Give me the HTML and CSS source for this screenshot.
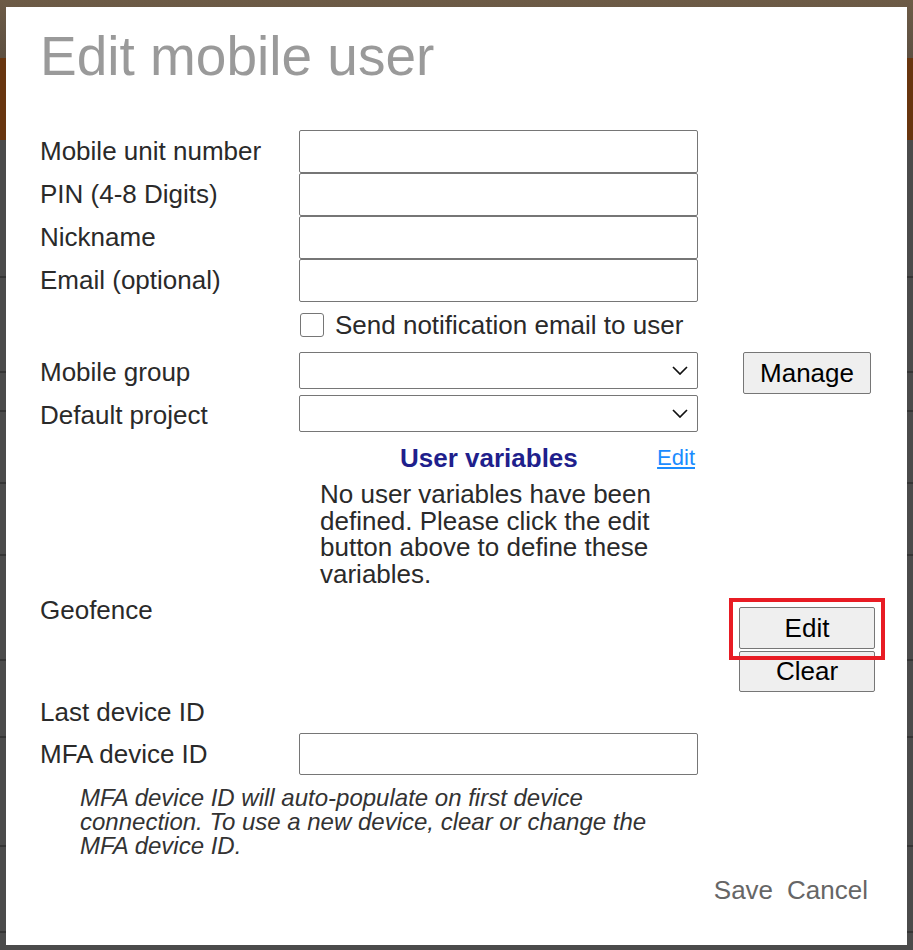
FILE: index.html
```html
<!DOCTYPE html>
<html lang="en">
<head>
<meta charset="utf-8">
<title>Edit mobile user</title>
<link rel="stylesheet" href="styles.css">
</head>
<body>
<div class="dialog">
  <h1 class="title">Edit mobile user</h1>
  <div class="form">
    <div class="row"><label class="lbl">Mobile unit number</label><input class="txt" type="text"></div>
    <div class="row"><label class="lbl">PIN (4-8 Digits)</label><input class="txt" type="text"></div>
    <div class="row"><label class="lbl">Nickname</label><input class="txt" type="text"></div>
    <div class="row"><label class="lbl">Email (optional)</label><input class="txt" type="text"></div>
    <div class="check-row"><input class="check" type="checkbox"><span>Send notification email to user</span></div>
    <div class="row sel-row">
      <label class="lbl">Mobile group</label>
      <div class="selwrap"><select class="sel"></select><svg class="chev" width="16" height="9" viewBox="0 0 16 9"><path d="M1 1l7 7 7-7" fill="none" stroke="#111" stroke-width="1.7"/></svg></div>
      <button class="btn manage">Manage</button>
    </div>
    <div class="row sel-row">
      <label class="lbl">Default project</label>
      <div class="selwrap"><select class="sel"></select><svg class="chev" width="16" height="9" viewBox="0 0 16 9"><path d="M1 1l7 7 7-7" fill="none" stroke="#111" stroke-width="1.7"/></svg></div>
    </div>
    <div class="uv-head"><span class="uv-title">User variables</span><a class="uv-edit" href="#">Edit</a></div>
    <p class="uv-text">No user variables have been defined. Please click the edit button above to define these variables.</p>
    <div class="geo-row">
      <span class="lbl">Geofence</span>
      <div class="geo-btns">
        <div class="hl-wrap"><button class="btn geo-btn">Edit</button><span class="highlight"></span></div>
        <button class="btn geo-btn clear">Clear</button>
      </div>
    </div>
    <div class="row last-row"><span class="lbl">Last device ID</span></div>
    <div class="row mfa-row"><label class="lbl">MFA device ID</label><input class="txt" type="text"></div>
    <p class="note">MFA device ID will auto-populate on first device connection. To use a new device, clear or change the MFA device ID.</p>
  </div>
  <div class="actions"><a class="act" href="#">Save</a><a class="act" href="#">Cancel</a></div>
</div>
</body>
</html>
```
FILE: styles.css
```css
* { box-sizing: border-box; }

body {
  margin: 0;
  width: 913px;
  height: 950px;
  overflow: hidden;
  font-family: "Liberation Sans", Arial, sans-serif;
  background:
    linear-gradient(to bottom, transparent 276px, #353535 276px, #353535 278px, transparent 278px,
      transparent 371px, #353535 371px, #353535 373px, transparent 373px,
      transparent 410px, #353535 410px, #353535 412px, transparent 412px,
      transparent 482px, #353535 482px, #353535 484px, transparent 484px,
      transparent 554px, #353535 554px, #353535 556px, transparent 556px,
      transparent 659px, #353535 659px, #353535 661px, transparent 661px,
      transparent 736px, #353535 736px, #353535 738px, transparent 738px,
      transparent 845px, #353535 845px, #353535 847px, transparent 847px,
      transparent 931px, #353535 931px, #353535 933px, transparent 933px),
    linear-gradient(to bottom, #6d5b46 0, #5d5042 58px, #68350f 58px, #68350f 140px, #4b4b4b 140px);
}

.dialog {
  margin: 7px 0 0 6px;
  width: 901px;
  height: 938px;
  background: #fff;
  padding: 0 39px 0 34px;
  display: flex;
  flex-direction: column;
}

.title {
  margin: 17px 0 0;
  font-size: 55px;
  line-height: 64px;
  font-weight: normal;
  color: #9a9a9a;
}

.form {
  margin-top: 42px;
  font-size: 26px;
  color: #2a2a2a;
}

.row {
  display: flex;
  align-items: center;
  height: 43px;
}

.lbl {
  width: 259px;
  flex: none;
}

.txt {
  flex: none;
  width: 399px;
  height: 43px;
  margin: 0;
  padding: 0 6px;
  border: 1px solid #767676;
  border-radius: 2px;
  background: #fff;
  font: inherit;
}

.check-row {
  display: flex;
  align-items: center;
  padding: 11px 0 0 260px;
  margin-bottom: 15px;
  height: 35px;
}

.check {
  appearance: none;
  -webkit-appearance: none;
  flex: none;
  width: 24px;
  height: 24px;
  margin: 0 11px 0 0;
  border: 1px solid #767676;
  border-radius: 3px;
  background: #fff;
}

.sel-row {
  align-items: flex-start;
}

.sel-row .lbl {
  line-height: 40px;
}

.selwrap {
  display: grid;
  flex: none;
  width: 399px;
}

.sel {
  grid-area: 1 / 1;
  appearance: none;
  -webkit-appearance: none;
  width: 399px;
  height: 37px;
  margin: 0;
  border: 1px solid #767676;
  border-radius: 2px;
  background: #fff;
  font: inherit;
}

.chev {
  grid-area: 1 / 1;
  justify-self: end;
  align-self: center;
  margin-right: 10px;
  pointer-events: none;
}

.btn {
  background: #efefef;
  border: 1px solid #767676;
  border-radius: 2px;
  font-family: inherit;
  font-size: 26px;
  color: #000;
  padding: 0;
  margin: 0;
}

.manage {
  flex: none;
  margin-left: 45px;
  width: 128px;
  height: 42px;
}

.uv-head {
  display: flex;
  align-items: center;
  height: 40px;
  margin-left: 259px;
  width: 399px;
  padding: 0 3px 0 101px;
}

.uv-title {
  font-weight: bold;
  color: #1f1f8c;
}

.uv-edit {
  margin-left: auto;
  color: #1a8cff;
  text-decoration: underline;
  font-size: 22px;
}

.uv-text {
  margin: 3px 0 0 280px;
  width: 360px;
  line-height: 26.5px;
}

.geo-row {
  display: flex;
  align-items: flex-start;
  margin-top: 3px;
}

.geo-row .lbl {
  line-height: 40px;
}

.geo-btns {
  flex: none;
  display: flex;
  flex-direction: column;
  gap: 2px;
  margin: 17px 0 0 440px;
}

.hl-wrap {
  position: relative;
}

.geo-btn {
  display: block;
  width: 136px;
  height: 42px;
}

.geo-btn.clear {
  height: 41px;
}

.highlight {
  position: absolute;
  left: -10px;
  top: -9px;
  width: 156px;
  height: 62px;
  border: 4px solid #e81c24;
  z-index: 2;
  pointer-events: none;
}

.last-row {
  height: 41px;
}

.mfa-row {
  height: 42px;
}

.mfa-row .txt {
  height: 42px;
}

.note {
  margin: 11px 0 0 40px;
  width: 590px;
  font-style: italic;
  font-size: 24px;
  line-height: 24px;
  color: #333;
}

.actions {
  display: flex;
  justify-content: flex-end;
  gap: 14px;
  margin-top: 17px;
  line-height: 30px;
  font-size: 26px;
}

.act {
  color: #666;
  text-decoration: none;
}
```
